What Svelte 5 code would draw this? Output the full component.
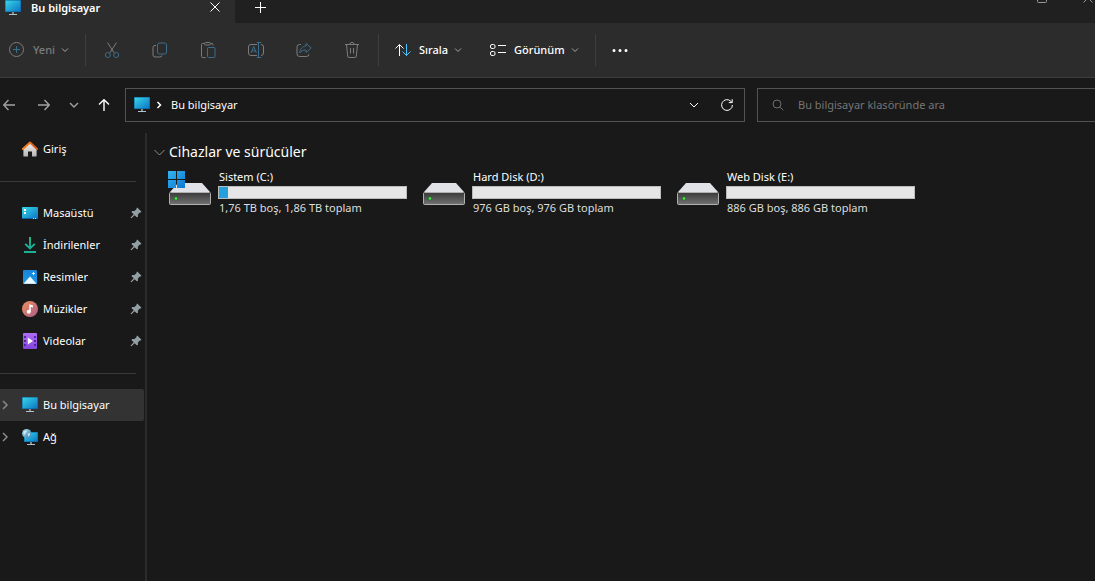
<script>
  const places = [
    { name: 'Masaüstü', icon: 'desktop' },
    { name: 'İndirilenler', icon: 'download' },
    { name: 'Resimler', icon: 'picture' },
    { name: 'Müzikler', icon: 'music' },
    { name: 'Videolar', icon: 'video' }
  ];

  const roots = [
    { name: 'Bu bilgisayar', icon: 'pc' },
    { name: 'Ağ', icon: 'network' }
  ];

  const drives = [
    { name: 'Sistem (C:)', info: '1,76 TB boş, 1,86 TB toplam', used: 5, system: true },
    { name: 'Hard Disk (D:)', info: '976 GB boş, 976 GB toplam', used: 0 },
    { name: 'Web Disk (E:)', info: '886 GB boş, 886 GB toplam', used: 0 }
  ];

  const actions = [
    { label: 'Kes', icon: 'cut' },
    { label: 'Kopyala', icon: 'copy' },
    { label: 'Yapıştır', icon: 'paste' },
    { label: 'Yeniden adlandır', icon: 'rename' },
    { label: 'Paylaş', icon: 'share' },
    { label: 'Sil', icon: 'trash' }
  ];

  let selected = $state('Bu bilgisayar');
  let open = $state(true);
  let query = $state('');
</script>

{#snippet chevron()}
  <svg class="chevron" viewBox="0 0 8 8" width="8" height="8"><path d="M1 2.5l3 3 3-3" /></svg>
{/snippet}

{#snippet icon(name)}
  <svg class="icon" viewBox="0 0 16 16" width="16" height="16">
    {#if name === 'pc'}
      <rect x="0" y="0" width="16" height="12" rx=".6" fill="#0a5c94" />
      <rect x=".5" y=".5" width="15" height="11" fill="url(#screen)" />
      <rect x="7" y="12" width="2" height="2" fill="#7f8d97" />
      <rect x="4" y="14" width="8" height="1" fill="#b4c0c8" />
    {:else if name === 'network'}
      <rect x="2" y="3" width="14" height="10" fill="#0a5c94" />
      <rect x="2.5" y="3.5" width="13" height="9" fill="url(#screen)" />
      <rect x="8" y="13" width="2" height="2" fill="#7f8d97" />
      <rect x="5" y="15" width="8" height="1" fill="#b4c0c8" />
      <circle cx="4.7" cy="4.6" r="4.6" fill="url(#globe)" />
      <path d="M2 2.2l2.3-.8 1 1.4-1.8 1.4-.7 1.7-1.6-1.2zM5.6 4.6l2.2-.5.3 2-1.9 1.8z" fill="#e4f3fb" opacity=".75" />
    {:else if name === 'home'}
      <path d="M10 15.6h4a.6.6 0 0 0 .6-.6V7.5L8 2 1.4 7.5V15a.6.6 0 0 0 .6.6h4v-5.2h4z" fill="url(#wall)" />
      <path d="M.9 8L8 1.5 15.1 8" fill="none" stroke="url(#roof)" stroke-width="2" stroke-linecap="round" stroke-linejoin="round" />
    {:else if name === 'desktop'}
      <rect x="0" y="2" width="16" height="12" rx=".8" fill="url(#screen)" />
      <path d="M2 4h2v2H2zM2 7h2v2H2z" fill="#fff" />
      <path d="M0 13h16v1H0z" fill="#0a63a8" />
      <path d="M11 13h1v1h-1zM13 13h1v1h-1z" fill="#b9e4fa" />
    {:else if name === 'download'}
      <path d="M8 0v11M3.2 6.8L8 11.5l4.8-4.7" fill="none" stroke="url(#green)" stroke-width="1.8" />
      <rect x="2" y="14" width="12" height="2" fill="#17b394" />
    {:else if name === 'picture'}
      <rect x="1" y="1" width="14" height="14" rx="1" fill="url(#blue)" />
      <path d="M1.5 14.8L8 7.5l6.5 7.3z" fill="#f2f9ff" />
      <path d="M11.5 2.5l.6 1.4 1.4.6-1.4.6-.6 1.4-.6-1.4-1.4-.6 1.4-.6z" fill="#fff" />
    {:else if name === 'music'}
      <circle cx="8" cy="8" r="8" fill="url(#sunset)" />
      <circle cx="6.8" cy="10.7" r="2" fill="#fff" />
      <path d="M7.3 10.7V3.2L11 4.5v2L8.8 5.8v4.9z" fill="#fff" />
    {:else if name === 'video'}
      <rect x="1" y="0" width="14" height="16" rx="1" fill="url(#violet)" />
      <path d="M2 3h2v2H2zM2 7h2v2H2zM2 11h2v2H2zM12 3h2v2h-2zM12 7h2v2h-2zM12 11h2v2h-2z" fill="#4b2a9b" />
      <path d="M5.8 4.5L11 8l-5.2 3.5z" fill="#fff" />
    {/if}
  </svg>
{/snippet}

{#snippet action(name)}
  <svg class="line" viewBox="0 0 16 16" width="16" height="16">
    {#if name === 'new'}
      <circle cx="7.5" cy="7.5" r="7" />
      <path class="accent" d="M7.5 4v7M4 7.5h7" />
    {:else if name === 'cut'}
      <path d="M3.5.5l6.6 10.3M12.5.5L5.9 10.8" />
      <circle class="accent" cx="3.8" cy="13" r="2.5" />
      <circle class="accent" cx="12.2" cy="13" r="2.5" />
    {:else if name === 'copy'}
      <path d="M4 3.5H3a2 2 0 0 0-2 2V13a2 2 0 0 0 2 2h5a2 2 0 0 0 2-1.5" />
      <rect class="accent" x="5.5" y="1" width="9" height="11" rx="2" />
    {:else if name === 'paste'}
      <path d="M4.5 1.5h-2a1 1 0 0 0-1 1v12a1 1 0 0 0 1 1h3M10.5 1.5H12a1 1 0 0 1 1 1v1" />
      <rect x="4.5" y=".5" width="6" height="2.5" rx="1.2" />
      <rect class="accent" x="7.5" y="5.5" width="7.5" height="10" rx="1" />
    {:else if name === 'rename'}
      <path d="M9 2.5H3A2.5 2.5 0 0 0 .5 5v6A2.5 2.5 0 0 0 3 13.5h6M13 2.5A2.5 2.5 0 0 1 15.5 5v6a2.5 2.5 0 0 1-2.5 2.5" />
      <path class="accent" d="M3 11l2.7-6.5L8.4 11M4 9h3.5M8.8.5h4.4M10.5.5v15M8.8 15.5h4.4" />
    {:else if name === 'share'}
      <path d="M5 2.5H3.5A2.5 2.5 0 0 0 1 5v7a2.5 2.5 0 0 0 2.5 2.5h7a2.5 2.5 0 0 0 2.5-2.3" />
      <path class="accent" d="M10 1.5L15.2 6 10 10.5V8C7 8 5.2 8.7 3.8 11 4 7 6.2 4.3 10 4z" />
    {:else if name === 'trash'}
      <path d="M1 2.5h14M2.5 2.5L3.7 14a1.5 1.5 0 0 0 1.5 1.5h5.6a1.5 1.5 0 0 0 1.5-1.5l1.2-11.5M5.8 2.5a2.2 2.2 0 0 1 4.4 0M6.5 6v5.5M9.5 6v5.5" />
    {:else if name === 'sort'}
      <path d="M4.5 14V2.5M.5 6.5l4-4 4 4" />
      <path class="accent" d="M11.5 2v11.5M7.5 9.5l4 4 4-4" />
    {:else if name === 'view'}
      <rect x=".5" y="2.5" width="4.5" height="4" rx="1.5" />
      <rect x=".5" y="9.5" width="4.5" height="4" rx="1.5" />
      <path d="M8 3.5h8M8 10.5h8" />
    {:else if name === 'more'}
      <path class="dots" d="M2 8.5h.01M8 8.5h.01M14 8.5h.01" />
    {/if}
  </svg>
{/snippet}

<!-- gradients shared by all icons -->
<svg class="defs" width="0" height="0" aria-hidden="true">
  <defs>
    <linearGradient id="screen" x1="0" y1="0" x2="1" y2="1">
      <stop offset="0" stop-color="#38d6e8" /><stop offset="1" stop-color="#0b74c4" />
    </linearGradient>
    <linearGradient id="globe" x1="0" y1="0" x2="1" y2="1">
      <stop offset="0" stop-color="#b5dff2" /><stop offset="1" stop-color="#2b7fae" />
    </linearGradient>
    <linearGradient id="wall" x1="0" y1="0" x2="0" y2="1">
      <stop offset="0" stop-color="#f0f0f0" /><stop offset="1" stop-color="#b5b5b5" />
    </linearGradient>
    <linearGradient id="roof" x1="0" y1="0" x2="1" y2="0">
      <stop offset="0" stop-color="#f58a1f" /><stop offset="1" stop-color="#d9541e" />
    </linearGradient>
    <linearGradient id="green" gradientUnits="userSpaceOnUse" x1="0" y1="0" x2="0" y2="14">
      <stop offset="0" stop-color="#27c98f" /><stop offset="1" stop-color="#12a79b" />
    </linearGradient>
    <linearGradient id="blue" x1="0" y1="0" x2="0" y2="1">
      <stop offset="0" stop-color="#1683d8" /><stop offset="1" stop-color="#1c9be8" />
    </linearGradient>
    <linearGradient id="sunset" x1="0" y1="0" x2="1" y2="1">
      <stop offset="0" stop-color="#f0915a" /><stop offset="1" stop-color="#a85b8c" />
    </linearGradient>
    <linearGradient id="violet" x1="0" y1="0" x2="0" y2="1">
      <stop offset="0" stop-color="#b06cf5" /><stop offset="1" stop-color="#8446e0" />
    </linearGradient>
    <linearGradient id="disk" x1="0" y1="0" x2="0" y2="1">
      <stop offset="0" stop-color="#3a3a3a" /><stop offset="1" stop-color="#727272" />
    </linearGradient>
    <linearGradient id="windows" x1="0" y1="0" x2="1" y2="1">
      <stop offset="0" stop-color="#35b4f0" /><stop offset="1" stop-color="#0a78d4" />
    </linearGradient>
  </defs>
</svg>

<div class="window">
  <header class="tabs">
    <div class="tab">
      {@render icon('pc')}
      <span class="tab-title">Bu bilgisayar</span>
      <button class="plain" aria-label="Sekmeyi kapat">
        <svg viewBox="0 0 10 10" width="10" height="10"><path d="M.5.5l9 9M9.5.5l-9 9" /></svg>
      </button>
    </div>
    <button class="plain add" aria-label="Yeni sekme">
      <svg viewBox="0 0 11 11" width="11" height="11"><path d="M5.5 0v11M0 5.5h11" /></svg>
    </button>
    <div class="caption">
      <button class="plain" aria-label="Ekranı kapla">
        <svg viewBox="0 0 10 10" width="10" height="10"><rect x=".5" y=".5" width="9" height="9" rx="1" /></svg>
      </button>
      <button class="plain" aria-label="Kapat">
        <svg viewBox="0 0 10 10" width="10" height="10"><path d="M.5.5l9 9M9.5.5l-9 9" /></svg>
      </button>
    </div>
  </header>

  <div class="toolbar">
    <button class="tool new" disabled>{@render action('new')}<span>Yeni</span>{@render chevron()}</button>
    <span class="sep"></span>
    {#each actions as item}
      <button class="tool square" disabled aria-label={item.label}>{@render action(item.icon)}</button>
    {/each}
    <span class="sep"></span>
    <button class="tool">{@render action('sort')}<span>Sırala</span>{@render chevron()}</button>
    <button class="tool">{@render action('view')}<span>Görünüm</span>{@render chevron()}</button>
    <span class="sep"></span>
    <button class="tool" aria-label="Diğer">{@render action('more')}</button>
  </div>

  <div class="navbar">
    <div class="history">
      <button class="plain dim back" aria-label="Geri">
        <svg viewBox="0 0 12 12" width="12" height="12"><path d="M12 6H.8M5.5 1L.7 6l4.8 5" /></svg>
      </button>
      <button class="plain dim" aria-label="İleri">
        <svg viewBox="0 0 12 12" width="12" height="12"><path d="M0 6h11.2M6.5 1l4.8 5-4.8 5" /></svg>
      </button>
      <button class="plain dim" aria-label="Son konumlar">
        <svg viewBox="0 0 12 12" width="12" height="12"><path d="M2 4l4 4 4-4" /></svg>
      </button>
      <button class="plain" aria-label="Yukarı">
        <svg viewBox="0 0 12 12" width="12" height="12"><path d="M6 12V.8M1 5.5L6 .7l5 4.8" /></svg>
      </button>
    </div>
    <div class="address">
      {@render icon('pc')}
      <svg class="crumb" viewBox="0 0 6 8" width="6" height="8"><path d="M1.5 1l3 3-3 3" /></svg>
      <a href="#pc">Bu bilgisayar</a>
      <button class="plain" aria-label="Önceki konumlar">
        <svg viewBox="0 0 10 10" width="10" height="10"><path d="M1 3l4 4 4-4" /></svg>
      </button>
      <button class="plain" aria-label="Yenile">
        <svg viewBox="0 0 12 12" width="12" height="12"><path d="M11.4 6A5.4 5.4 0 1 1 9.8 2.2L11 3.4M11.2.2v3.4H7.8" /></svg>
      </button>
    </div>
    <label class="search">
      <svg viewBox="0 0 12 12" width="12" height="12"><circle cx="5" cy="5" r="4" /><path d="M8 8l3.3 3.3" /></svg>
      <input type="text" bind:value={query} aria-label="Ara" placeholder="Bu bilgisayar klasöründe ara" />
    </label>
  </div>

  <div class="body">
    <nav class="sidebar">
      <button class="item">{@render icon('home')}<span>Giriş</span></button>
      <hr />
      {#each places as place}
        <button class="item" class:active={selected === place.name} onclick={() => (selected = place.name)}>
          {@render icon(place.icon)}
          <span>{place.name}</span>
          <svg class="pin" viewBox="0 0 12 12" width="12" height="12">
            <path d="M7.3.5l4.2 4.2-.8.9-.8-.1-2 2 .1 2.1-1 1-2.3-2.3-3.3 3-.8-.2v-.6l3.1-3.2L1.4 5l1-1 2.1.1 2.1-2-.1-.8z" />
          </svg>
        </button>
      {/each}
      <hr />
      {#each roots as root}
        <button class="item" class:active={selected === root.name} onclick={() => (selected = root.name)}>
          <svg class="expand" viewBox="0 0 8 10" width="8" height="10"><path d="M2 1l4 4-4 4" /></svg>
          {@render icon(root.icon)}
          <span>{root.name}</span>
        </button>
      {/each}
    </nav>

    <main>
      <button class="group" aria-expanded={open} onclick={() => (open = !open)}>
        <svg viewBox="0 0 11 11" width="11" height="11"><path d="M.5 3l5 5 5-5" /></svg>
        <span>Cihazlar ve sürücüler</span>
      </button>
      {#if open}
        <ul class="drives">
          {#each drives as drive}
            <li>
              <svg class="disk" viewBox="0 0 44 36" width="44" height="36">
                <path d="M10 12h24l8 9H2z" fill="#e1e2e8" />
                <rect x="1.5" y="21.5" width="41" height="12" rx="1" fill="url(#disk)" stroke="#b0b0b0" />
                <circle cx="8" cy="27.5" r="2" fill="#167a1a" />
                <circle cx="8" cy="27.5" r="1.2" fill="#4df04f" />
                {#if drive.system}
                  <path d="M0 0h8v8H0zM9 0h8v8H9zM0 9h8v8H0zM9 9h8v8H9z" fill="url(#windows)" />
                {/if}
              </svg>
              <div class="details">
                <span>{drive.name}</span>
                <div class="meter"><div style="width: {drive.used}%"></div></div>
                <span class="info">{drive.info}</span>
              </div>
            </li>
          {/each}
        </ul>
      {/if}
    </main>
  </div>
</div>

<style>
  :global(body) {
    background: #191919;
  }

  .window {
    display: flex;
    flex-direction: column;
    min-height: 100vh;
    overflow: hidden;
    background: #191919;
    color: #fff;
    font-family: 'Noto Sans', 'Open Sans', sans-serif;
    font-size: 11px;
    line-height: 16px;
  }

  .defs {
    position: absolute;
  }

  svg {
    display: block;
    flex: none;
    fill: none;
    stroke: currentColor;
  }

  .icon {
    stroke: none;
  }

  button {
    display: flex;
    align-items: center;
    margin: 0;
    padding: 0;
    border: 0;
    background: none;
    color: inherit;
    font: inherit;
    text-align: left;
  }

  .plain {
    justify-content: center;
  }

  /* tab strip */
  .tabs {
    display: flex;
    height: 23px;
    background: #202020;
  }

  .tab {
    display: flex;
    align-items: flex-start;
    box-sizing: border-box;
    width: 235px;
    padding: 0 15px 0 5px;
    background: #2c2c2c;
    font-weight: 600;
  }

  .tab-title {
    flex: 1;
    margin-left: 10px;
  }

  .tab button,
  .add {
    height: 14px;
  }

  .add {
    width: 51px;
  }

  .caption {
    display: flex;
    gap: 36px;
    margin: -7px 2px 0 auto;
    height: 10px;
    color: #999;
  }

  /* command bar */
  .toolbar {
    display: flex;
    align-items: center;
    height: 54px;
    padding-left: 9px;
    border-bottom: 1px solid #3c3c3c;
    background: #2c2c2c;
    font-weight: 500;
  }

  .tool {
    gap: 8px;
    height: 32px;
    padding: 0 14px;
  }

  .new {
    padding-left: 0;
  }

  .square {
    padding: 0 16px;
  }

  .tool:disabled {
    color: #7c7c7c;
  }

  .tool .chevron {
    margin-left: -2px;
    color: #a8a8a8;
  }

  .accent {
    stroke: #4cc2ff;
  }

  .tool:disabled .accent {
    stroke: #3a6e8c;
  }

  .dots {
    stroke-width: 3;
    stroke-linecap: round;
  }

  .sep {
    width: 1px;
    height: 32px;
    margin: 0 2px;
    background: #3e3e3e;
  }

  /* address row */
  .navbar {
    display: flex;
    padding: 10px 0 11px;
  }

  .history {
    display: flex;
    align-items: center;
    gap: 18px;
    box-sizing: border-box;
    width: 125px;
    padding-left: 3px;
  }

  .history svg {
    stroke-width: 1.4;
  }

  .back {
    margin-right: 5px;
  }

  .dim {
    color: #a2a2a2;
  }

  .address,
  .search {
    display: flex;
    align-items: center;
    box-sizing: border-box;
    height: 34px;
    border: 1px solid #535353;
  }

  .address {
    flex: 1;
    padding: 0 11px 0 8px;
  }

  .crumb {
    margin: 0 9px 0 6px;
    stroke-width: 1.5;
  }

  .address a {
    flex: 1;
    color: #fff;
    text-decoration: none;
  }

  .address button + button {
    margin-left: 22px;
  }

  .search {
    width: 338px;
    margin-left: 12px;
    padding-left: 14px;
    border-right: 0;
    color: #6d6d6d;
  }

  .search input {
    flex: 1;
    min-width: 0;
    margin-left: 14px;
    padding: 0;
    border: 0;
    outline: 0;
    background: none;
    color: #fff;
    font: inherit;
  }

  .search input::placeholder {
    color: #757575;
    opacity: 1;
  }

  /* navigation pane */
  .body {
    display: flex;
    flex: 1;
  }

  .sidebar {
    width: 145px;
    border-right: 2px solid #2b2b2b;
  }

  .item {
    position: relative;
    gap: 5px;
    box-sizing: border-box;
    width: 144px;
    height: 32px;
    padding: 0 2px 0 22px;
    border-radius: 0 2px 2px 0;
  }

  .item span {
    flex: 1;
  }

  .active {
    background: #333;
  }

  .expand {
    position: absolute;
    left: 1px;
    color: #8a8a8a;
    stroke-width: 1.5;
  }

  .pin {
    fill: #939da4;
    stroke: none;
  }

  hr {
    height: 1px;
    margin: 16px 9px 15px 0;
    border: 0;
    background: #3a3a3a;
  }

  /* drives */
  main {
    flex: 1;
    padding: 9px 0 0 7px;
  }

  .group {
    gap: 4px;
    font-size: 14px;
    line-height: 20px;
  }

  .group svg {
    color: #8f8f8f;
  }

  .drives {
    display: flex;
    flex-wrap: wrap;
    margin: 7px 0 0;
    padding: 0 0 0 14px;
    list-style: none;
  }

  .drives li {
    display: flex;
    gap: 6px;
    width: 254px;
  }

  .disk {
    margin-top: 2px;
    stroke: none;
  }

  .details {
    width: 189px;
  }

  .details span {
    display: block;
    padding-left: 1px;
  }

  .meter {
    box-sizing: border-box;
    height: 13px;
    margin: 1px 0;
    border: 1px solid #bcbcbc;
    background: #e6e6e6;
  }

  .meter div {
    height: 100%;
    background: #26a0da;
  }

  .info {
    color: #dedede;
  }
</style>
